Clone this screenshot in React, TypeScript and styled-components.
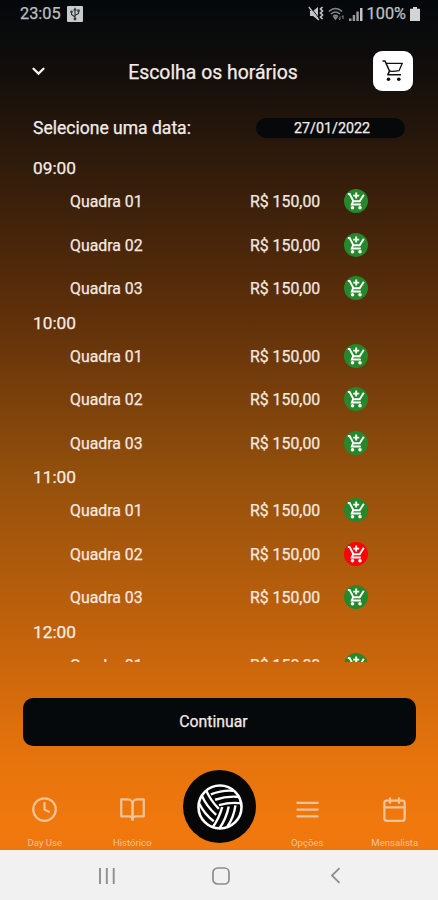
import React from "react";
import styled, { createGlobalStyle } from "styled-components";
import { FiBookOpen, FiCalendar, FiClock, FiMenu } from "react-icons/fi";

const GlobalStyle = createGlobalStyle`
  *, *::before, *::after { box-sizing: border-box; }
  body { margin: 0; background: #f1f1f1; }
  button { border: 0; padding: 0; font: inherit; color: inherit; cursor: pointer; }
`;

const Screen = styled.div`
  width: 438px;
  height: 900px;
  display: flex;
  flex-direction: column;
  overflow: hidden;
  font-family: Roboto, "Liberation Sans", sans-serif;
  color: #f3ece6;
  -webkit-text-stroke: 0.25px currentColor;
`;

const AppArea = styled.div`
  flex: 1;
  min-height: 0;
  display: flex;
  flex-direction: column;
  background: linear-gradient(
    #05080b 0px,
    #080a0c 26px,
    #130e0b 75px,
    #2b190b 150px,
    #5d2f0a 310px,
    #95500c 480px,
    #cc670c 670px,
    #e5730d 755px,
    #f0780d 820px,
    #ef770d 850px
  );
`;

const StatusBar = styled.div`
  height: 27px;
  padding: 0 18px 0 20px;
  display: flex;
  align-items: center;
  justify-content: space-between;
  font-size: 16.3px;
  color: #bfc0c0;
`;

const StatusGroup = styled.div<{ $gap: number }>`
  display: flex;
  align-items: center;
  gap: ${(p) => p.$gap}px;
`;

const Header = styled.header`
  height: 88px;
  padding: 0 25px 0 31px;
  display: grid;
  grid-template-columns: 40px 1fr 40px;
  align-items: center;
`;

const IconButton = styled.button`
  display: flex;
  align-items: center;
  background: none;
`;

const CartButton = styled(IconButton)`
  width: 40px;
  height: 40px;
  justify-content: center;
  border-radius: 9px;
  background: #fff;
  color: #111;
`;

const Title = styled.h1`
  margin: 0;
  padding: 2px 18px 0 0;
  font-size: 19.4px;
  font-weight: 400;
  text-align: center;
  white-space: nowrap;
`;

const DateRow = styled.div`
  height: 26px;
  padding: 0 33px;
  display: flex;
  align-items: center;
  justify-content: space-between;
  font-size: 17.55px;
`;

const DateField = styled.button`
  width: 149px;
  height: 20px;
  padding-left: 3px;
  border-radius: 10px;
  background: #06080a;
  font-size: 14.3px;
  line-height: 20px;
  text-align: center;
`;

const Schedule = styled.div`
  height: 505.5px;
  margin-top: 15px;
  overflow: hidden;
`;

const Hour = styled.h2`
  margin: 0;
  padding-left: 33px;
  height: 24px;
  line-height: 24px;
  font-size: 17.3px;
  font-weight: 400;
`;

const SlotRow = styled.div`
  height: 43.5px;
  padding-left: 70px;
  display: grid;
  grid-template-columns: 180px 93.5px 24px;
  align-items: center;
  font-size: 15.85px;
  color: #f4e9e0;
`;

const SlotButton = styled.button<{ $taken: boolean }>`
  width: 24px;
  height: 24px;
  margin-top: -1px;
  display: flex;
  align-items: center;
  justify-content: center;
  border-radius: 50%;
  background: ${(p) => (p.$taken ? "#fb0307" : "#25882b")};
  color: #fff;
`;

const ContinueButton = styled.button`
  flex: none;
  width: 393px;
  height: 48.5px;
  margin: 36px 0 0 22.5px;
  padding-right: 11px;
  border-radius: 10px;
  background: #06090b;
  font-size: 15.8px;
`;

const TabBar = styled.nav`
  margin-top: 24px;
  padding-left: 1px;
  height: 79px;
  display: grid;
  grid-template-columns: repeat(5, 87.5px);
`;

const Tab = styled.button`
  padding-top: 26px;
  display: flex;
  flex-direction: column;
  align-items: center;
  background: none;
  color: #efc39a;
`;

const TabLabel = styled.span`
  margin-top: 13px;
  font-size: 9.6px;
  line-height: 13px;
  -webkit-text-stroke: 0;
`;

const HomeTab = styled.button`
  width: 73px;
  height: 73px;
  justify-self: center;
  display: flex;
  align-items: center;
  justify-content: center;
  border-radius: 50%;
  background: #060607;
`;

const SystemNav = styled.footer`
  height: 50.5px;
  flex: none;
  display: grid;
  grid-template-columns: repeat(3, 114px);
  padding: 2px 0 0 50px;
  align-items: center;
  justify-items: center;
  background: #f1f1f1;
  svg { display: block; }
`;

const UsbIcon = () => (
  <svg width="16" height="16" viewBox="0 0 16 16">
    <rect width="16" height="16" rx="1" fill="#c9caca" />
    <g stroke="#34373a" strokeWidth="1.2" fill="none">
      <path d="M8 3v10M8 11L4.500 8.500V6M8 9.500l3.500-2V5" />
    </g>
    <path d="M8 1.500L10 4.500H6zM10.300 3.500h2.400v2.300h-2.400z" fill="#34373a" />
    <circle cx="4.500" cy="5.800" r="1.300" fill="#34373a" />
    <circle cx="8" cy="13" r="1.400" fill="#34373a" />
  </svg>
);

const MuteIcon = () => (
  <svg width="16" height="15" viewBox="0 0 16 15">
    <path d="M2 5h3l5-4v13L5 10H2z" fill="#c4c5c5" />
    <path d="M2 .5l10 13" stroke="#0a0b0c" strokeWidth="1" />
    <path d="M.8 1l10 13" stroke="#bfc0c0" strokeWidth="1.300" />
    <path d="M14.500 1l-2 2 2 2-2 2 2 2-2 2 2 2" stroke="#bfc0c0" strokeWidth="1.700" fill="none" />
  </svg>
);

const WifiIcon = () => (
  <svg width="17" height="14" viewBox="0 0 17 14" fill="none" stroke="#85878a" strokeWidth="1.500">
    <path d="M.8 4.500Q7.500-1.500 14.200 4.500M3 7q4.500-4 9 0M5.200 9.300q2.300-2 4.600 0" />
    <path d="M6 10l1.500 2L9 10z" fill="#85878a" />
    <path d="M12 9.500v3M10.800 11.500l1.200 1.500M15 12V8.500M13.800 10L15 8.700" strokeWidth="1" />
  </svg>
);

const SignalIcon = () => (
  <svg width="14" height="14" viewBox="0 0 14 14">
    <path d="M0 11.500h2.500V14H0zM3.700 8h2.400v6H3.700zM7.300 4.500h2.500V14H7.300z" fill="#999b9c" />
    <path d="M11 1h2.500v13H11z" fill="#c2c3c3" />
  </svg>
);

const BatteryIcon = () => (
  <svg width="10" height="14" viewBox="0 0 10 14">
    <path d="M3 0h4v1.800h3V14H0V1.800h3z" fill="#d3d4d4" />
  </svg>
);

const ChevronDown = () => (
  <svg width="15" height="11" viewBox="0 0 15 11">
    <path d="M2.500 2.700l5 4.900 5-4.900" fill="none" stroke="#f5f1ed" strokeWidth="2.300" strokeLinecap="round" />
  </svg>
);

const CartIcon = () => (
  <svg width="22" height="22" viewBox="0 0 22 22" fill="none" stroke="currentColor" strokeWidth="1.300" strokeLinejoin="round">
    <path d="M.5 1H3l4.500 10L5.800 14.800H19" strokeWidth="1.600" />
    <path d="M4 3.300h16.300L17 10.700q-4.500.8-9.500.5" />
    <circle cx="6.500" cy="19.300" r="1.800" fill="currentColor" stroke="none" />
    <circle cx="16.800" cy="19.300" r="1.800" fill="currentColor" stroke="none" />
  </svg>
);

const AddCartIcon = () => (
  <svg width="18" height="18" viewBox="0 0 18 18" fill="none" stroke="currentColor" strokeWidth="1.900">
    <path d="M.8 2h1.800l3.900 7.300h6.200L16.800 2.800M6 9.300l-1.200 3.200h9" />
    <path d="M9.200.6v6M6.200 3.600h6" />
    <circle cx="5.500" cy="15.700" r="1.800" fill="currentColor" stroke="none" />
    <circle cx="13" cy="15.700" r="1.800" fill="currentColor" stroke="none" />
  </svg>
);

/* One third of the ball: a seam and two panel stripes, repeated at 120 degrees. */
const BallPanel = ({ turn }: { turn: number }) => (
  <g transform={`rotate(${turn})`}>
    <path d="M-1-2Q11-4.500 22-2.500M-4.500-7.500Q8-11 20-9M-8.500-13Q3-17 14-15.500" />
  </g>
);

const BallIcon = () => (
  <svg width="48" height="48" viewBox="-24 -24 48 48" fill="none" stroke="#fff" strokeWidth="2.400">
    <circle r="21.500" strokeWidth="2.600" />
    <BallPanel turn={-3} />
    <BallPanel turn={117} />
    <BallPanel turn={237} />
  </svg>
);

const RecentsIcon = () => (
  <svg width="18" height="16" viewBox="0 0 18 16">
    <path d="M2 0v16M8.800 0v16M15.700 0v16" stroke="#8f8f8f" strokeWidth="1.900" />
  </svg>
);

const HomeIcon = () => (
  <svg width="18" height="18" viewBox="0 0 18 18">
    <rect x="1" y="1" width="16" height="16" rx="4.500" fill="none" stroke="#8d8d8d" strokeWidth="1.700" />
  </svg>
);

const BackIcon = () => (
  <svg width="11" height="17" viewBox="0 0 11 17">
    <path d="M9.500 1.200L2 8.500l7.500 7.300" fill="none" stroke="#8d8d8d" strokeWidth="1.800" />
  </svg>
);

const courts = ["Quadra 01", "Quadra 02", "Quadra 03"];
const schedule = [
  { hour: "09:00", taken: [] as string[] },
  { hour: "10:00", taken: [] as string[] },
  { hour: "11:00", taken: ["Quadra 02"] },
  { hour: "12:00", taken: [] as string[] },
];

export default function App() {
  return (
    <Screen>
      <GlobalStyle />
      <AppArea>
        <StatusBar>
          <StatusGroup $gap={6}>
            <span>23:05</span>
            <UsbIcon />
          </StatusGroup>
          <StatusGroup $gap={4}>
            <MuteIcon />
            <WifiIcon />
            <SignalIcon />
            <span>100%</span>
            <BatteryIcon />
          </StatusGroup>
        </StatusBar>
        <Header>
          <IconButton aria-label="Voltar">
            <ChevronDown />
          </IconButton>
          <Title>Escolha os horários</Title>
          <CartButton aria-label="Carrinho">
            <CartIcon />
          </CartButton>
        </Header>
        <DateRow>
          <span>Selecione uma data:</span>
          <DateField>27/01/2022</DateField>
        </DateRow>
        <Schedule>
          {schedule.map(({ hour, taken }) => (
            <section key={hour}>
              <Hour>{hour}</Hour>
              {(hour === "12:00" ? courts.slice(0, 1) : courts).map((court) => (
                <SlotRow key={court}>
                  <span>{court}</span>
                  <span>R$ 150,00</span>
                  <SlotButton $taken={taken.includes(court)} aria-label="Adicionar">
                    <AddCartIcon />
                  </SlotButton>
                </SlotRow>
              ))}
            </section>
          ))}
        </Schedule>
        <ContinueButton>Continuar</ContinueButton>
        <TabBar>
          <Tab>
            <FiClock size={27} />
            <TabLabel>Day Use</TabLabel>
          </Tab>
          <Tab>
            <FiBookOpen size={27} />
            <TabLabel>Histórico</TabLabel>
          </Tab>
          <HomeTab aria-label="Início">
            <BallIcon />
          </HomeTab>
          <Tab>
            <FiMenu size={27} />
            <TabLabel>Opções</TabLabel>
          </Tab>
          <Tab>
            <FiCalendar size={27} />
            <TabLabel>Mensalista</TabLabel>
          </Tab>
        </TabBar>
      </AppArea>
      <SystemNav>
        <RecentsIcon />
        <HomeIcon />
        <BackIcon />
      </SystemNav>
    </Screen>
  );
}
